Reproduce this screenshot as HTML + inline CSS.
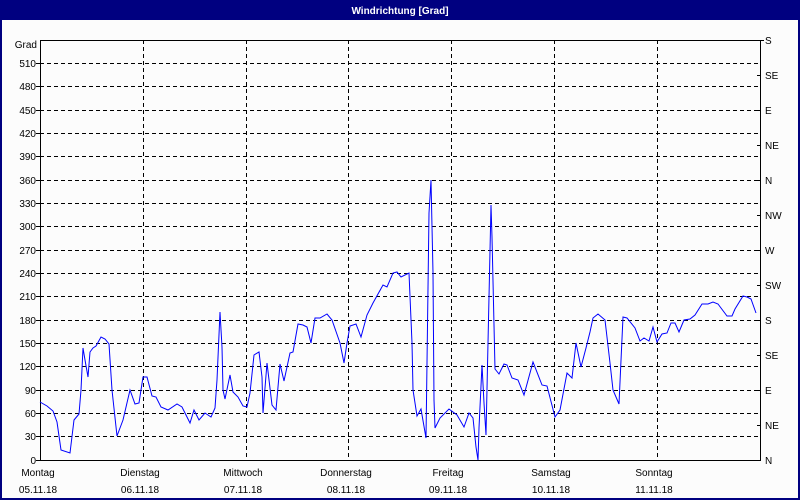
<!DOCTYPE html>
<html><head><meta charset="utf-8"><style>
html,body{margin:0;padding:0;background:#fff}
body{width:800px;height:500px;overflow:hidden;position:relative;font-family:"Liberation Sans",sans-serif}
</style></head><body>
<svg width="800" height="500" xmlns="http://www.w3.org/2000/svg" style="position:absolute;left:0;top:0" font-family="Liberation Sans, sans-serif" font-size="10">
<rect x="0" y="0" width="800" height="500" fill="#000080"/>
<rect x="2" y="20" width="796" height="478" fill="#fcfcfc"/>
<text x="400" y="14" fill="#fff" font-weight="bold" text-anchor="middle">Windrichtung [Grad]</text>
<g stroke="#000" stroke-width="1" stroke-dasharray="4,3" shape-rendering="crispEdges">
<line x1="40" y1="63.5" x2="760" y2="63.5"/><line x1="40" y1="86.5" x2="760" y2="86.5"/><line x1="40" y1="110.5" x2="760" y2="110.5"/><line x1="40" y1="133.5" x2="760" y2="133.5"/><line x1="40" y1="156.5" x2="760" y2="156.5"/><line x1="40" y1="180.5" x2="760" y2="180.5"/><line x1="40" y1="203.5" x2="760" y2="203.5"/><line x1="40" y1="226.5" x2="760" y2="226.5"/><line x1="40" y1="250.5" x2="760" y2="250.5"/><line x1="40" y1="273.5" x2="760" y2="273.5"/><line x1="40" y1="296.5" x2="760" y2="296.5"/><line x1="40" y1="320.5" x2="760" y2="320.5"/><line x1="40" y1="343.5" x2="760" y2="343.5"/><line x1="40" y1="366.5" x2="760" y2="366.5"/><line x1="40" y1="390.5" x2="760" y2="390.5"/><line x1="40" y1="413.5" x2="760" y2="413.5"/><line x1="40" y1="436.5" x2="760" y2="436.5"/>
<line x1="143.5" y1="40" x2="143.5" y2="460"/><line x1="246.5" y1="40" x2="246.5" y2="460"/><line x1="348.5" y1="40" x2="348.5" y2="460"/><line x1="451.5" y1="40" x2="451.5" y2="460"/><line x1="554.5" y1="40" x2="554.5" y2="460"/><line x1="657.5" y1="40" x2="657.5" y2="460"/>
</g>
<g stroke="#000" fill="none" shape-rendering="crispEdges">
<rect x="40.5" y="40.5" width="720" height="420"/>
<path d="M36 63.5h4M36 86.5h4M36 110.5h4M36 133.5h4M36 156.5h4M36 180.5h4M36 203.5h4M36 226.5h4M36 250.5h4M36 273.5h4M36 296.5h4M36 320.5h4M36 343.5h4M36 366.5h4M36 390.5h4M36 413.5h4M36 436.5h4M36 460.5h4"/>
<path d="M761 40.5h3M757 75.5h4M757 110.5h4M757 145.5h4M757 180.5h4M757 215.5h4M757 250.5h4M757 285.5h4M757 320.5h4M757 355.5h4M757 390.5h4M757 425.5h4M757 460.5h4"/>
</g>
<polyline fill="none" stroke="#0000ff" stroke-width="1" points="40,402 47,406 53,411 57,422 61,450 70,453 74,420 79,414 81,390 83,348 85,360 88,377 90,352 93,348 96,346 101,337 105,339 109,344 112,390 117,436 123,420 130,390 135,404 139,403 143,377 147,377 152,396 156,397 161,407 168,410 177,404 182,407 190,423 194,410 199,420 205,413 211,417 215,408 217,380 220,312 222,347 223,390 225,399 230,375 233,392 238,397 243,406 247,407 250,393 254,355 259,352 262,377 263,413 267,363 272,405 276,410 280,364 284,381 290,353 293,352 298,324 303,325 307,327 311,343 315,318 320,318 327,314 332,320 340,343 344,363 347,343 350,326 356,324 361,337 367,315 373,303 383,285 387,287 393,273 397,272 401,277 409,273 412,343 413,390 417,416 421,409 426,438 429,213 431,180 433,273 434,400 435,428 440,418 449,409 457,415 464,427 469,413 473,418 476,447 478,460 479,428 482,365 484,403 486,435 488,343 491,205 492,237 495,369 499,374 504,364 507,365 512,378 518,380 524,395 533,362 542,385 547,386 555,417 560,410 567,373 572,378 576,343 581,367 586,348 590,332 593,318 598,314 605,320 610,363 613,390 619,404 623,317 627,318 635,328 640,341 644,338 649,341 653,327 657,342 662,334 667,333 671,323 675,323 679,332 684,320 690,319 695,315 702,304 708,304 713,302 718,304 727,316 732,316 735,309 743,296 747,297 751,299 756,313"/>
<g fill="#000" text-anchor="end">
<text x="37" y="48">Grad</text><text x="36" y="67">510</text><text x="36" y="90">480</text><text x="36" y="114">450</text><text x="36" y="137">420</text><text x="36" y="160">390</text><text x="36" y="184">360</text><text x="36" y="207">330</text><text x="36" y="230">300</text><text x="36" y="254">270</text><text x="36" y="277">240</text><text x="36" y="300">210</text><text x="36" y="324">180</text><text x="36" y="347">150</text><text x="36" y="370">120</text><text x="36" y="394">90</text><text x="36" y="417">60</text><text x="36" y="440">30</text><text x="36" y="464">0</text>
</g>
<g fill="#000">
<text x="765" y="44">S</text><text x="765" y="79">SE</text><text x="765" y="114">E</text><text x="765" y="149">NE</text><text x="765" y="184">N</text><text x="765" y="219">NW</text><text x="765" y="254">W</text><text x="765" y="289">SW</text><text x="765" y="324">S</text><text x="765" y="359">SE</text><text x="765" y="394">E</text><text x="765" y="429">NE</text><text x="765" y="464">N</text>
</g>
<g fill="#000" text-anchor="middle">
<text x="38" y="476">Montag</text><text x="38" y="493">05.11.18</text>
<text x="140" y="476">Dienstag</text><text x="140" y="493">06.11.18</text>
<text x="243" y="476">Mittwoch</text><text x="243" y="493">07.11.18</text>
<text x="346" y="476">Donnerstag</text><text x="346" y="493">08.11.18</text>
<text x="448" y="476">Freitag</text><text x="448" y="493">09.11.18</text>
<text x="551" y="476">Samstag</text><text x="551" y="493">10.11.18</text>
<text x="654" y="476">Sonntag</text><text x="654" y="493">11.11.18</text>
</g>
</svg>
</body></html>
